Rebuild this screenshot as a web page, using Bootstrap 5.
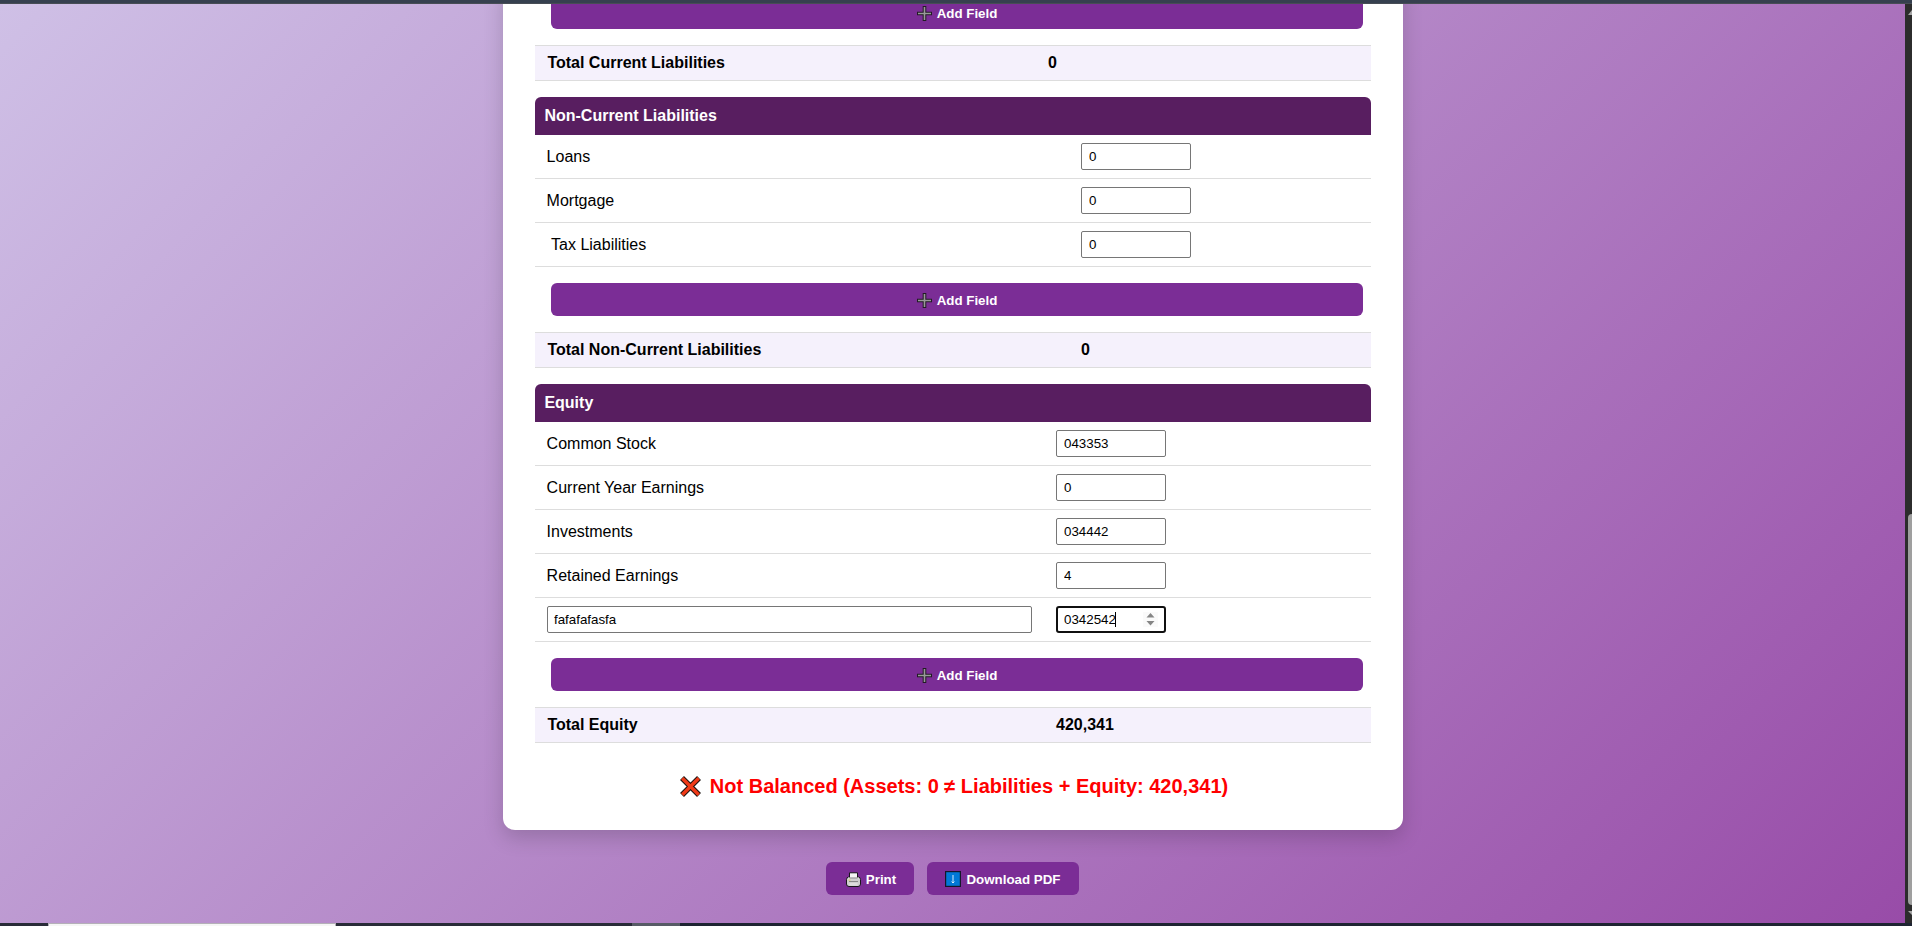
<!DOCTYPE html>
<html lang="en">
<head>
<meta charset="utf-8">
<title>Balance Sheet</title>
<meta name="viewport" content="width=device-width, initial-scale=1">
<link href="https://cdn.jsdelivr.net/npm/bootstrap@5.3.0/dist/css/bootstrap.min.css" rel="stylesheet">
<style>
  body { height: 926px; font-family: "Liberation Sans", Arial, sans-serif; font-size: 16px; line-height: 18px; color: #000; }
  .top-strip { height: 4px; background: #36404f; border-bottom: 1px solid #474d55; }
  .page { background: linear-gradient(135deg, #cfc0e6, #984ca8); padding-bottom: 28px; }
  .sheet { width: 900px; padding: 0 32px 32px; border-radius: 12px; margin-left: 503px; box-shadow: 0 8px 20px rgba(0,0,0,.17); }
  .btn-purple, .btn-purple:hover { background: #7b2d96; color: #fff; border: 0; border-radius: 6px; height: 33px; padding: 1px 0 0; font-size: 13.333px; font-weight: 700; line-height: 15px; gap: 5px; }
  .btn-print { width: 88px; padding-left: 2px; }
  .btn-download { width: 152px; }
  .actions { padding-top: 32px; gap: 13px; }
  .add-wrap { padding: 16px 8px 16px 16px; }
  .section-title { background: #581e60; height: 38px; padding: 0 9.4px; border-radius: 6px 6px 0 0; }
  .entry { height: 44px; border-bottom: 1px solid #ddd; padding-left: 11.6px; }
  .total-line { height: 36px; background: #f5f1fc; border: solid #ddd; border-width: 1px 0; padding-left: 12.4px; margin-bottom: 16px; }
  .label-col { flex: 0 0 auto; width: var(--label); padding-right: 24px; }
  .is-current { --label: 501.4px; }
  .is-noncurrent { --label: 534.4px; }
  .is-equity { --label: 509.4px; }
  .total-line .label-col { width: calc(var(--label) - .8px); }
  .form-control.amount, .form-control.caption { height: 27px; min-height: 0; padding: 0 6.4px; border: 1px solid #767676; border-radius: 2px; font-size: 13.333px; line-height: 15px; color: #000; box-shadow: none; }
  .form-control.amount { width: 110px; padding-left: 7px; }
  .form-control.active-field { border: 2px solid #101010; border-radius: 3px; padding: 0 5.4px 0 6px; }
  .caret { left: 59px; top: 6px; width: 1px; height: 15px; background: #000; }
  .spin { left: 87px; top: 6px; }
  .verdict { color: red; font-size: 20px; line-height: 24px; padding: 15px 0 0 2px; gap: 9px; }
  .scroll-track { width: 7px; background: #2c2c2c; }
  .scroll-thumb { height: 391px; width: 4px; background: #9f9f9f; border-radius: 4px 0 0 4px; }
  .task-strip { height: 3px; background: #292c38; }
  .task-strip .window-tab { width: 288px; margin-left: 48px; background: #f6f6f6; border: 1px solid #b4b0b8; border-bottom: 0; }
  .task-strip .task-tab { width: 48px; margin-left: 296px; background: #575b66; }
  .task-strip .rest { background: #1e2432; }
</style>
</head>
<body class="d-flex flex-column overflow-hidden">
<svg width="0" height="0" class="position-absolute">
  <symbol id="plus" viewBox="0 0 15 15"><path d="M7.500 0v15M0 7.500h15" stroke="#211b24" stroke-width="3.600"/><path d="M7.500 1v13M1 7.500h13" stroke="#999" stroke-width="1.600"/></symbol>
</svg>
<div class="top-strip flex-shrink-0"></div>
<div class="d-flex flex-grow-1 overflow-hidden">
  <main class="page flex-grow-1 d-flex flex-column justify-content-end overflow-hidden">
    <div class="sheet bg-white flex-shrink-0">
      <section class="is-current">
        <div class="add-wrap"><button class="btn btn-purple w-100 d-flex align-items-center justify-content-center"><svg width="15" height="15"><use href="#plus"/></svg>Add Field</button></div>
        <div class="total-line d-flex align-items-center fw-bold"><span class="label-col">Total Current Liabilities</span><span>0</span></div>
      </section>
      <section class="is-noncurrent">
        <div class="section-title d-flex align-items-center text-white fw-bold">Non-Current Liabilities</div>
        <div class="entry d-flex align-items-center"><span class="label-col">Loans</span><input class="form-control amount" value="0"></div>
        <div class="entry d-flex align-items-center"><span class="label-col">Mortgage</span><input class="form-control amount" value="0"></div>
        <div class="entry d-flex align-items-center"><span class="label-col">&nbsp;Tax Liabilities</span><input class="form-control amount" value="0"></div>
        <div class="add-wrap"><button class="btn btn-purple w-100 d-flex align-items-center justify-content-center"><svg width="15" height="15"><use href="#plus"/></svg>Add Field</button></div>
        <div class="total-line d-flex align-items-center fw-bold"><span class="label-col">Total Non-Current Liabilities</span><span>0</span></div>
      </section>
      <section class="is-equity">
        <div class="section-title d-flex align-items-center text-white fw-bold">Equity</div>
        <div class="entry d-flex align-items-center"><span class="label-col">Common Stock</span><input class="form-control amount" value="043353"></div>
        <div class="entry d-flex align-items-center"><span class="label-col">Current Year Earnings</span><input class="form-control amount" value="0"></div>
        <div class="entry d-flex align-items-center"><span class="label-col">Investments</span><input class="form-control amount" value="034442"></div>
        <div class="entry d-flex align-items-center"><span class="label-col">Retained Earnings</span><input class="form-control amount" value="4"></div>
        <div class="entry d-flex align-items-center"><span class="label-col"><input class="form-control caption" value="fafafafasfa"></span>
          <div class="position-relative"><input class="form-control amount active-field" value="0342542"><span class="caret position-absolute"></span>
            <svg class="spin position-absolute" width="15" height="15"><path d="M0 0h15v15H0z" fill="#fafafa"/><path d="M3.500 5.500l4-4.500 4 4.500zM3.500 9l4 4.500 4-4.500z" fill="#858585"/></svg></div></div>
        <div class="add-wrap"><button class="btn btn-purple w-100 d-flex align-items-center justify-content-center"><svg width="15" height="15"><use href="#plus"/></svg>Add Field</button></div>
        <div class="total-line d-flex align-items-center fw-bold"><span class="label-col">Total Equity</span><span>420,341</span></div>
      </section>
      <div class="verdict d-flex align-items-center justify-content-center fw-bold">
        <svg width="21" height="21" viewBox="0 0 21 21"><path d="M2 2l17 17M19 2L2 19" stroke="#1c1411" stroke-width="5.600"/><path d="M2.300 2.300l16.400 16.400M18.700 2.300L2.300 18.700" stroke="#f03a17" stroke-width="3.400"/></svg>
        <span>Not Balanced (Assets: 0 ≠ Liabilities + Equity: 420,341)</span>
      </div>
    </div>
    <div class="actions d-flex justify-content-center flex-shrink-0">
      <button class="btn btn-purple btn-print d-flex align-items-center justify-content-center"><svg width="15" height="15" viewBox="0 0 15 15"><rect x=".5" y="5" width="14" height="9.500" rx="2.500" fill="#cfcfcf" stroke="#19141c"/><path d="M3.500 6V.8h8V6z" fill="#f5f5f5" stroke="#19141c"/><path d="M2 6h11" stroke="#ececec"/><path d="M3 9.500h9" stroke="#888"/><path d="M3.500 11h8v2.500h-8z" fill="#ddd"/><path d="M2.500 8h2" stroke="#d8d850"/></svg>Print</button>
      <button class="btn btn-purple btn-download d-flex align-items-center justify-content-center"><svg width="16" height="16" viewBox="0 0 16 16"><rect x=".6" y=".6" width="14.800" height="14.800" fill="#0078d7" stroke="#14172b" stroke-width="1.200"/><path d="M8 4v8M6.600 10.600L8 12l1.400-1.400" fill="none" stroke="#d7ecfb"/></svg>Download PDF</button>
    </div>
  </main>
  <aside class="scroll-track d-flex flex-column align-items-end justify-content-between flex-shrink-0">
    <svg width="4" height="11"><path d="M0 11l4-5v5z" fill="#a5a5a5"/></svg>
    <div class="d-flex flex-column"><div class="scroll-thumb"></div><svg width="4" height="18"><path d="M0 6h4v4z" fill="#a5a5a5"/></svg></div>
  </aside>
</div>
<div class="task-strip d-flex flex-shrink-0"><div class="window-tab"></div><div class="task-tab"></div><div class="rest flex-grow-1"></div></div>
<script src="https://cdn.jsdelivr.net/npm/bootstrap@5.3.0/dist/js/bootstrap.bundle.min.js"></script>
</body>
</html>
